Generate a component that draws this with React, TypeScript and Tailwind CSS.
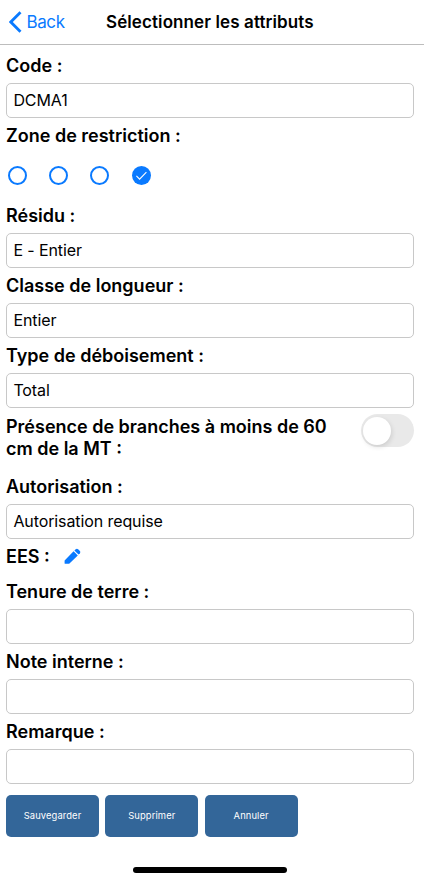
import React, { useState } from 'react';

interface LabelProps {
  children: React.ReactNode;
}

const Label: React.FC<LabelProps> = ({ children }) => (
  <div className="flex h-[35px] items-center whitespace-nowrap text-[18px] font-semibold">
    {children}
  </div>
);

interface FieldProps {
  label: string;
  value?: string;
}

const Field: React.FC<FieldProps> = ({ label, value = '' }) => (
  <div>
    <Label>{label}</Label>
    <div className="flex h-[35px] w-[408px] items-center rounded-[5px] border border-[#c8c8c8] px-[6.4px] pb-[2px] text-[16px] tracking-[-0.1px]">
      {value}
    </div>
  </div>
);

interface ZoneRadioProps {
  checked: boolean;
  onSelect: () => void;
}

const ZoneRadio: React.FC<ZoneRadioProps> = ({ checked, onSelect }) => (
  <button type="button" onClick={onSelect} className="size-[19px]">
    <svg width="19" height="19" viewBox="0 0 19 19" fill="none">
      {checked ? (
        <>
          <circle cx="9.5" cy="9.5" r="9.5" fill="#0a7aff" />
          <path d="M4.4 9.9l3.2 3.2 6.8-7" stroke="#fff" strokeWidth="1.1" />
        </>
      ) : (
        <circle cx="9.5" cy="9.5" r="8.5" stroke="#0a7aff" strokeWidth="2" />
      )}
    </svg>
  </button>
);

const zones = [0, 1, 2, 3];
const actions = ['Sauvegarder', 'Supprimer', 'Annuler'];

const App: React.FC = () => {
  const [zone, setZone] = useState(3);
  const [branches, setBranches] = useState(false);

  return (
    <div className="h-[880px] w-[428px] overflow-hidden bg-white font-[Inter,sans-serif] text-black">
      <div className="w-[424px]">
        {/* Navigation bar */}
        <header className="flex h-[45px] items-center border-b border-[#bdbdbd] pl-[9px]">
          <button type="button" className="flex w-[97px] items-center gap-[4.5px] text-[17px] tracking-[-0.4px] text-[#0a7aff]">
            <svg width="13" height="22" viewBox="0 0 13 22" fill="none">
              <path d="M11.5 1.2L1.8 11l9.7 9.8" stroke="currentColor" strokeWidth="2.8" />
            </svg>
            <span className="pt-px">Back</span>
          </button>
          <h1 className="whitespace-nowrap pt-px text-[17px] font-semibold tracking-[0.1px]">Sélectionner les attributs</h1>
        </header>

        <main className="px-[6px] pt-[3px]">
          <Field label="Code :" value="DCMA1" />

          <Label>Zone de restriction :</Label>
          <div className="flex h-[45px] items-center gap-[22.4px] pl-[1.7px]">
            {zones.map((z) => (
              <ZoneRadio key={z} checked={zone === z} onSelect={() => setZone(z)} />
            ))}
          </div>

          <Field label="Résidu :" value="E - Entier" />
          <Field label="Classe de longueur :" value="Entier" />
          <Field label="Type de déboisement :" value="Total" />

          <div className="flex h-[61px] w-[408px] justify-between pt-[7px]">
            <div className="whitespace-nowrap pt-[0.5px] text-[18px] font-semibold leading-[22px]">
              Présence de branches à moins de 60
              <br />
              cm de la MT :
            </div>
            <button
              type="button"
              onClick={() => setBranches(!branches)}
              className={`-mt-px flex h-[33px] w-[53px] items-center rounded-full px-[2px] ${branches ? 'justify-end bg-[#34c759]' : 'bg-[#e9e9e9]'}`}
            >
              <span className="size-[28px] rounded-full bg-white shadow-[1px_2px_5px_rgba(0,0,0,0.12)]" />
            </button>
          </div>

          <Field label="Autorisation :" value="Autorisation requise" />

          <div className="flex items-center gap-[14px]">
            <Label>EES :</Label>
            <svg width="17" height="17" viewBox="0 0 17 17" fill="#0a7aff">
              <path d="M0.6 15.6V12.6L9.6 3.2l4.2 4.2-8.6 8.4H1.2q-.6 0-.6-.6z" />
              <path d="M10.4 2.4l1.3-1.2q1.2-1 2.4 0l1.8 1.8q1 1.1 0 2.2l-1.4 1.4z" />
            </svg>
          </div>

          <Field label="Tenure de terre :" />
          <Field label="Note interne :" />
          <Field label="Remarque :" />

          {/* Form actions */}
          <div className="mt-[11px] flex gap-[6.3px]">
            {actions.map((action) => (
              <button
                key={action}
                type="button"
                className="h-[41.5px] w-[93px] rounded-[5px] bg-[#336699] text-[9.4px] tracking-[0.1px] text-white"
              >
                {action}
              </button>
            ))}
          </div>
        </main>

        {/* Home indicator */}
        <div className="ml-[133px] mt-[30.5px] h-[5.5px] w-[154px] rounded-full bg-black" />
      </div>
    </div>
  );
};

export default App;
